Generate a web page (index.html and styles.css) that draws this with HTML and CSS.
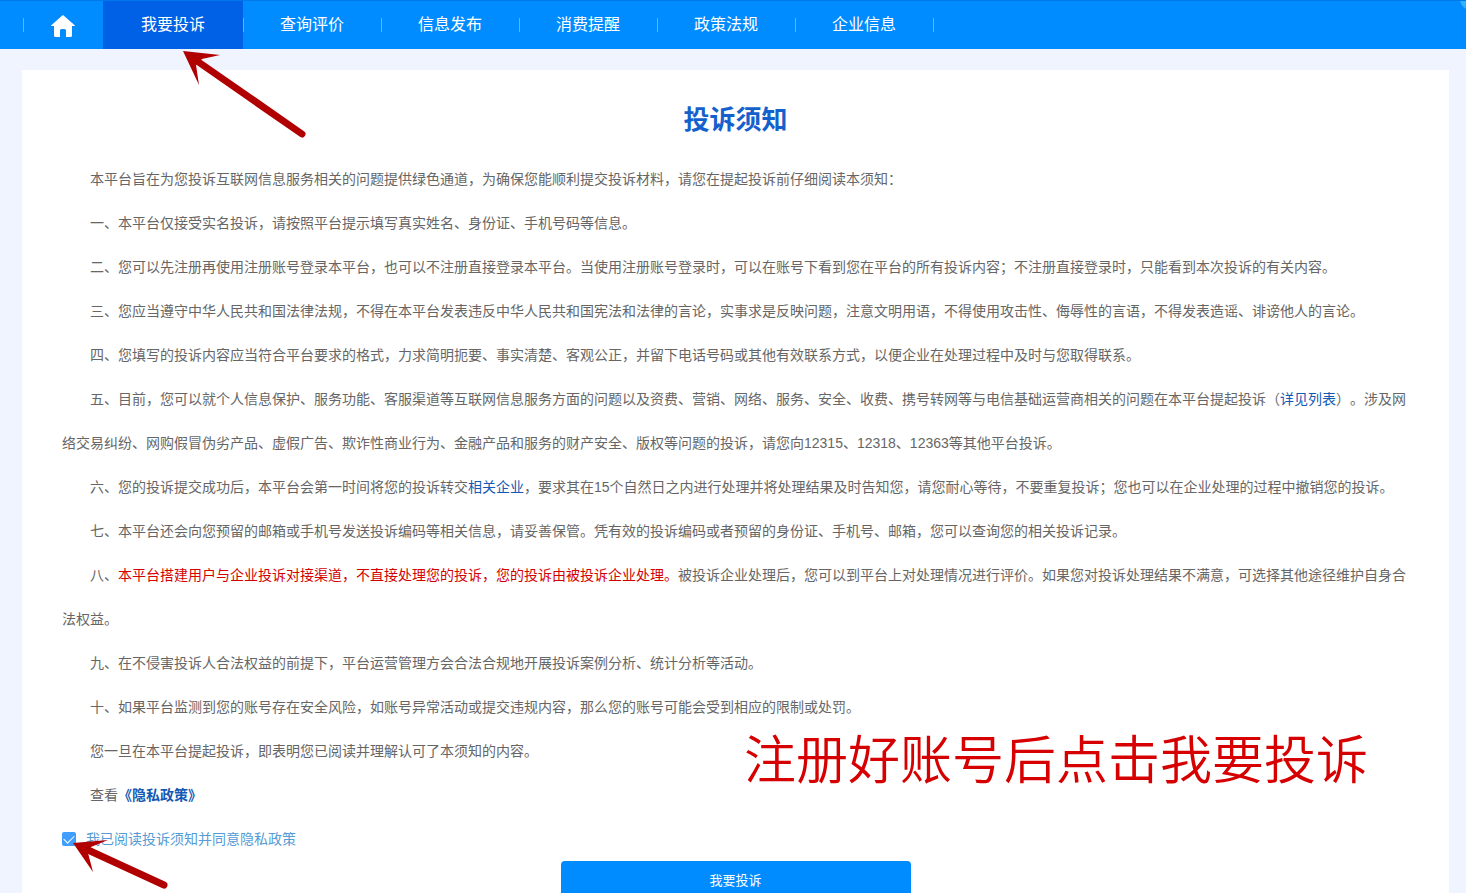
FILE: index.html
```
<!DOCTYPE html>
<html lang="zh-CN">

<head>
    <meta charset="UTF-8">
    <meta name="viewport" content="width=device-width, initial-scale=1">
    <title>投诉须知</title>
    <link rel="stylesheet" href="styles.css">
</head>

<body>
    <nav class="main-nav">
        <ul class="nav-list">
            <li class="nav-item home">
                <a href="#" aria-label="首页">
                    <svg class="home-icon" viewBox="0 0 24 22" aria-hidden="true">
                        <path d="M12 0L24 10.500Q24 11 23 11H21V20.500Q21 22 19.500 22H15V15.500Q15 14 13.500 14H10.500Q9 14 9 15.500V22H4.500Q3 22 3 20.500V11H1Q0 11 0 10.500L11 .800Q12 0 12 0Z" fill="#fff"/>
                    </svg>
                </a>
            </li>
            <li class="nav-item active"><a href="#">我要投诉</a></li>
            <li class="nav-item"><a href="#">查询评价</a></li>
            <li class="nav-item"><a href="#">信息发布</a></li>
            <li class="nav-item"><a href="#">消费提醒</a></li>
            <li class="nav-item"><a href="#">政策法规</a></li>
            <li class="nav-item"><a href="#">企业信息</a></li>
            <li class="nav-item nav-end"></li>
        </ul>
        <span class="corner-dot"></span>
    </nav>

    <main class="panel">
        <h1>投诉须知</h1>
        <div class="notice">
            <p>本平台旨在为您投诉互联网信息服务相关的问题提供绿色通道，为确保您能顺利提交投诉材料，请您在提起投诉前仔细阅读本须知：</p>
            <p>一、本平台仅接受实名投诉，请按照平台提示填写真实姓名、身份证、手机号码等信息。</p>
            <p>二、您可以先注册再使用注册账号登录本平台，也可以不注册直接登录本平台。当使用注册账号登录时，可以在账号下看到您在平台的所有投诉内容；不注册直接登录时，只能看到本次投诉的有关内容。</p>
            <p>三、您应当遵守中华人民共和国法律法规，不得在本平台发表违反中华人民共和国宪法和法律的言论，实事求是反映问题，注意文明用语，不得使用攻击性、侮辱性的言语，不得发表造谣、诽谤他人的言论。</p>
            <p>四、您填写的投诉内容应当符合平台要求的格式，力求简明扼要、事实清楚、客观公正，并留下电话号码或其他有效联系方式，以便企业在处理过程中及时与您取得联系。</p>
            <p>五、目前，您可以就个人信息保护、服务功能、客服渠道等互联网信息服务方面的问题以及资费、营销、网络、服务、安全、收费、携号转网等与电信基础运营商相关的问题在本平台提起投诉（<a href="#">详见列表</a>）。涉及网络交易纠纷、网购假冒伪劣产品、虚假广告、欺诈性商业行为、金融产品和服务的财产安全、版权等问题的投诉，请您向12315、12318、12363等其他平台投诉。</p>
            <p>六、您的投诉提交成功后，本平台会第一时间将您的投诉转交<a href="#">相关企业</a>，要求其在15个自然日之内进行处理并将处理结果及时告知您，请您耐心等待，不要重复投诉；您也可以在企业处理的过程中撤销您的投诉。</p>
            <p>七、本平台还会向您预留的邮箱或手机号发送投诉编码等相关信息，请妥善保管。凭有效的投诉编码或者预留的身份证、手机号、邮箱，您可以查询您的相关投诉记录。</p>
            <p>八、<span class="warn">本平台搭建用户与企业投诉对接渠道，不直接处理您的投诉，您的投诉由被投诉企业处理。</span>被投诉企业处理后，您可以到平台上对处理情况进行评价。如果您对投诉处理结果不满意，可选择其他途径维护自身合法权益。</p>
            <p>九、在不侵害投诉人合法权益的前提下，平台运营管理方会合法合规地开展投诉案例分析、统计分析等活动。</p>
            <p>十、如果平台监测到您的账号存在安全风险，如账号异常活动或提交违规内容，那么您的账号可能会受到相应的限制或处罚。</p>
            <p>您一旦在本平台提起投诉，即表明您已阅读并理解认可了本须知的内容。</p>
            <p>查看<a href="#" class="policy">《隐私政策》</a></p>
        </div>
        <div class="agree">
            <input type="checkbox" id="agree" checked>
            <label for="agree">我已阅读投诉须知并同意隐私政策</label>
        </div>
        <button type="button" class="submit">我要投诉</button>
    </main>

    <!-- step hints drawn over the page -->
    <svg class="arrow arrow-nav" viewBox="0 0 124 90" aria-hidden="true">
        <path class="head" d="M1 1L38 5L20 9L14 15L17 35Z"/>
        <path class="shaft" d="M15 11L120 84"/>
    </svg>
    <svg class="arrow arrow-agree" viewBox="0 0 96 52" aria-hidden="true">
        <path class="head" d="M1 4L36 1L19 8L16 14L21 33Z"/>
        <path class="shaft" d="M16 11L92 46"/>
    </svg>
    <div class="hint">注册好账号后点击我要投诉</div>
</body>

</html>
```

FILE: styles.css
```
:root {
    --blue: #008cff;
    --blue-active: #0060e6;
    --link: #1459b3;
    --page-bg: #f0f4fe;
    --text: #666;
    --arrow: #b00000;
}

* {
    box-sizing: border-box;
}

html {
    scrollbar-width: none;
}

body {
    position: relative;
    margin: 0;
    background: var(--page-bg);
    color: var(--text);
    font-family: "Liberation Sans", "Noto Sans CJK SC", sans-serif;
    font-size: 14px;
    text-spacing-trim: space-all;
}

a {
    color: var(--link);
    text-decoration: none;
}

/* Navigation */
.main-nav {
    position: relative;
    overflow: hidden;
    background: var(--blue);
    border-top: 1px solid #0078ea;
}

.nav-list {
    display: flex;
    height: 48px;
    margin: 0;
    padding: 0 0 0 23px;
    list-style: none;
}

.nav-item {
    display: flex;
    align-items: center;
    width: 138px;
}

.nav-item::before {
    content: "";
    width: 1px;
    height: 14px;
    margin-right: -1px;
    background: #55b8ff;
}

.nav-item a {
    flex: 1;
    color: #fff;
    font-size: 16px;
    line-height: 46px;
    text-align: center;
}

.nav-item.home {
    width: 80px;
}

.nav-item.home a {
    display: flex;
    justify-content: center;
    padding-top: 2px;
}

.nav-item.active {
    width: 140px;
    background: var(--blue-active);
}

.nav-item.active::before {
    display: none;
}

.nav-item.nav-end {
    width: 1px;
}

.nav-item.nav-end::before {
    margin-right: 0;
}

.home-icon {
    width: 24px;
    height: 22px;
}

.corner-dot {
    position: absolute;
    top: -13px;
    right: -16px;
    width: 22px;
    height: 22px;
    border-radius: 50%;
    background: #35b0ff;
}

/* Notice */
.panel {
    margin: 21px 17px 0 22px;
    padding: 28px 40px 40px;
    background: #fff;
}

h1 {
    margin: 0 0 15px;
    color: #1460cc;
    font-size: 26px;
    line-height: 44px;
    text-align: center;
}

.notice p {
    margin: 0;
    line-height: 44px;
    text-indent: 28px;
}

.warn {
    color: #d40000;
}

.policy {
    font-weight: bold;
}

.agree {
    display: flex;
    align-items: center;
    gap: 10px;
    height: 44px;
    color: #559bd5;
    line-height: 44px;
}

.agree input {
    appearance: none;
    width: 14px;
    height: 14px;
    margin: 0;
    border-radius: 2px;
    background: #409eff;
    display: grid;
    place-items: center;
}

.agree input:checked::before {
    content: "";
    width: 5px;
    height: 9px;
    margin-bottom: 3px;
    border: solid #fff;
    border-width: 0 1px 1px 0;
    transform: rotate(45deg);
}

.submit {
    display: block;
    width: 350px;
    height: 36px;
    margin: 0 auto;
    padding: 0;
    border: 0;
    border-radius: 4px;
    background: var(--blue);
    color: #fff;
    font-family: inherit;
    font-size: 13px;
}

/* Hints */
.arrow {
    position: absolute;
    pointer-events: none;
}

.arrow .head {
    fill: var(--arrow);
}

.arrow .shaft {
    fill: none;
    stroke: var(--arrow);
    stroke-width: 7;
    stroke-linecap: round;
}

.arrow-nav {
    top: 50px;
    left: 182px;
    width: 124px;
    height: 90px;
}

.arrow-agree {
    top: 839px;
    left: 72px;
    width: 96px;
    height: 52px;
}

.hint {
    position: absolute;
    top: 731px;
    left: 744px;
    color: #d60000;
    font-size: 52px;
    font-weight: 350;
    line-height: 60px;
    white-space: nowrap;
}
```
